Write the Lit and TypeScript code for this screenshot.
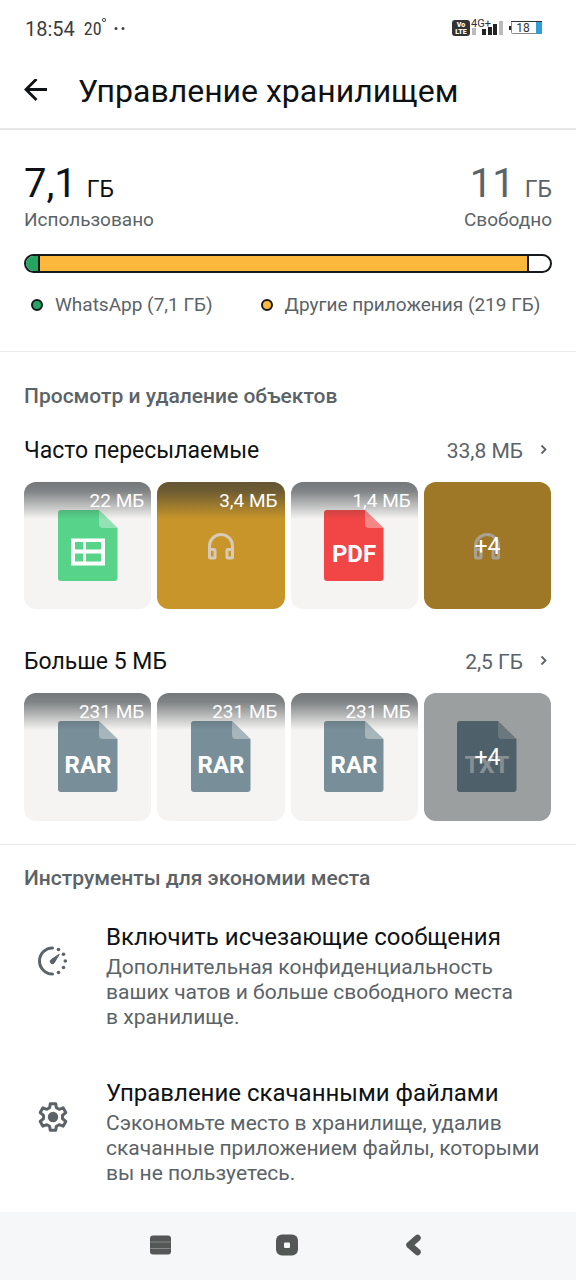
import { LitElement, html, css, svg, nothing } from "lit";
import { customElement, property } from "lit/decorators.js";

type Kind = "sheet" | "audio" | "pdf" | "rar" | "txt";

interface Tile {
  kind: Kind;
  size?: string;
  more?: string;
}

interface Group {
  title: string;
  total: string;
  tiles: Tile[];
}

const GROUPS: Group[] = [
  {
    title: "Часто пересылаемые",
    total: "33,8 МБ",
    tiles: [
      { kind: "sheet", size: "22 МБ" },
      { kind: "audio", size: "3,4 МБ" },
      { kind: "pdf", size: "1,4 МБ" },
      { kind: "audio", more: "+4" },
    ],
  },
  {
    title: "Больше 5 МБ",
    total: "2,5 ГБ",
    tiles: [
      { kind: "rar", size: "231 МБ" },
      { kind: "rar", size: "231 МБ" },
      { kind: "rar", size: "231 МБ" },
      { kind: "txt", more: "+4" },
    ],
  },
];

const USAGE = [
  { name: "app", share: 2.6 },
  { name: "other", share: 93.4 },
];

const FILE_COLORS: Record<Kind, string> = {
  sheet: "#58d38a",
  audio: "#c8952b",
  pdf: "#f24646",
  rar: "#788f9a",
  txt: "#788f9a",
};

@customElement("file-tile")
export class FileTile extends LitElement {
  @property({ attribute: false }) tile!: Tile;

  static styles = css`
    :host {
      display: block;
    }
    .tile {
      position: relative;
      display: grid;
      place-items: center;
      width: 100%;
      aspect-ratio: 1;
      padding: 0;
      border: 0;
      border-radius: 12px;
      overflow: hidden;
      background: #f5f4f2;
      font-family: Roboto, sans-serif;
      cursor: pointer;
    }
    .audio {
      background: #c8952b;
    }
    .shade {
      position: absolute;
      inset: 0 0 auto;
      height: 37px;
      background: linear-gradient(rgba(45, 52, 56, 0.65), rgba(45, 52, 56, 0.58) 25%, rgba(45, 52, 56, 0));
    }
    .size {
      position: absolute;
      top: 6px;
      right: 7px;
      font-size: 19px;
      line-height: 26px;
      color: #fff;
    }
    .more {
      position: absolute;
      inset: 0;
      display: grid;
      place-items: center;
      padding-top: 2px;
      font-size: 23px;
      line-height: 28px;
      color: #fff;
      background: rgba(11, 20, 26, 0.38);
    }
    .audio .more {
      background: rgba(11, 20, 26, 0.22);
    }
    .file {
      width: 60px;
      height: 71px;
    }
    .phones {
      width: 40px;
      height: 40px;
    }
    .ext {
      font: 700 24px Roboto, sans-serif;
      fill: #fff;
    }
    .dim {
      fill: #d6dadc;
    }
  `;

  private icon(kind: Kind) {
    if (kind === "audio") {
      return html`<svg class="phones" viewBox="0 0 40 40" fill="none" stroke="#d8cab8" stroke-width="3" aria-hidden="true">
        <path d="M8.500 24V20a11.500 11.500 0 0 1 23 0V24" />
        <rect x="8.500" y="23.500" width="5.500" height="8.500" rx="1" />
        <rect x="26" y="23.500" width="5.500" height="8.500" rx="1" />
      </svg>`;
    }
    return html`<svg class="file" viewBox="0 0 60 71" aria-hidden="true">
      <path d="M3 0H41L59.500 18V68a3 3 0 0 1-3 3H3a3 3 0 0 1-3-3V3a3 3 0 0 1 3-3Z" fill=${FILE_COLORS[kind]} />
      <path d="M41 0L59.500 18H45a4 4 0 0 1-4-4Z" fill="#fff" fill-opacity=".35" />
      ${kind === "sheet"
        ? svg`<path fill-rule="evenodd" fill="#fff" d="M13 28.500H47V55.500H13ZM17 32V39.500H25V32ZM28 32V39.500H43V32ZM17 43.500V51.500H25V43.500ZM28 43.500V51.500H43V43.500Z"/>`
        : svg`<text class=${kind === "txt" ? "ext dim" : "ext"} x="30" y="52" text-anchor="middle">${kind.toUpperCase()}</text>`}
    </svg>`;
  }

  render() {
    const { kind, size, more } = this.tile;
    return html`<button class="tile ${kind}" type="button">
      ${size ? html`<span class="shade"></span>` : nothing}
      ${this.icon(kind)}
      ${size ? html`<span class="size">${size}</span>` : nothing}
      ${more ? html`<span class="more">${more}</span>` : nothing}
    </button>`;
  }
}

@customElement("app-root")
export class AppRoot extends LitElement {
  static styles = css`
    :host {
      display: flex;
      flex-direction: column;
      min-height: 100vh;
      background: #fff;
      color: #0e1215;
      font-family: Roboto, sans-serif;
    }
    * {
      box-sizing: border-box;
    }
    h1,
    h2,
    h3,
    p,
    ul {
      margin: 0;
      padding: 0;
      font-weight: 400;
      list-style: none;
    }
    svg {
      display: block;
      flex: none;
    }
    button {
      padding: 0;
      border: 0;
      background: none;
      font: inherit;
      color: inherit;
      text-align: left;
      cursor: pointer;
    }
    .status {
      display: flex;
      align-items: center;
      height: 56px;
      padding: 2px 33px 0 25px;
      color: #3c3c3c;
      font-size: 20px;
      line-height: 24px;
    }
    .temp {
      margin-left: 9px;
      font-size: 18px;
      font-family: "Roboto Condensed", Roboto, sans-serif;
    }
    .deg {
      align-self: flex-start;
      margin: 15px 7px 0 0;
    }
    .signals {
      margin-left: auto;
    }
    .tiny {
      font: 11px Roboto, sans-serif;
      fill: #333;
    }
    .volte {
      font: 900 7px Roboto, sans-serif;
      fill: #fff;
    }
    .charge {
      font: 12px Roboto, sans-serif;
      fill: #333;
    }
    .bar {
      display: flex;
      align-items: center;
      gap: 30px;
      height: 74px;
      padding: 0 24px 2px;
      border-bottom: 2px solid #e6e7e8;
    }
    .title {
      font-size: 32px;
      line-height: 40px;
    }
    section {
      padding: 0 24px;
      border-bottom: 1px solid #e9eaeb;
    }
    .storage {
      padding-top: 30px;
      padding-bottom: 34px;
    }
    .figures {
      display: flex;
      justify-content: space-between;
    }
    .amount {
      font-size: 40px;
      line-height: 48px;
    }
    .unit {
      font-size: 23px;
      line-height: 24px;
    }
    .caption,
    .free {
      color: #5b6368;
    }
    .free {
      text-align: right;
    }
    .caption {
      font-size: 19px;
      line-height: 24px;
    }
    .meter {
      display: flex;
      height: 19px;
      margin-top: 22px;
      border: 2px solid #15191b;
      border-radius: 10px;
      overflow: hidden;
    }
    .part {
      border-right: 2px solid #15191b;
    }
    .app {
      background: #25a562;
    }
    .other {
      background: #fbb83c;
    }
    .legend {
      display: flex;
      gap: 48px;
      margin-top: 19px;
      padding-left: 7px;
    }
    .key {
      display: flex;
      align-items: center;
      gap: 12px;
      font-size: 19px;
      line-height: 25px;
      color: #5b6368;
      white-space: nowrap;
    }
    .dot {
      width: 12px;
      height: 12px;
      border: 2px solid #15191b;
      border-radius: 50%;
    }
    .review {
      padding-top: 32px;
      padding-bottom: 23px;
    }
    .heading {
      font-size: 21px;
      line-height: 24px;
      font-weight: 500;
      color: #5b6368;
    }
    .group {
      margin-top: 27px;
    }
    .group + .group {
      margin-top: 37px;
    }
    .row {
      display: flex;
      align-items: center;
      width: 100%;
      line-height: 32px;
    }
    .name {
      flex: 1;
      font-size: 23px;
    }
    .total {
      font-size: 21px;
      color: #5b6368;
    }
    .chevron {
      margin-left: 14px;
    }
    .tiles {
      display: grid;
      grid-template-columns: repeat(4, 1fr);
      gap: 6px;
      margin-top: 15px;
      padding-right: 1px;
    }
    .tools {
      flex: 1;
      padding-top: 21px;
      border: 0;
    }
    .options {
      display: flex;
      flex-direction: column;
      gap: 49px;
      padding: 33px 0 26px;
    }
    .option {
      display: flex;
      align-items: flex-start;
      gap: 37px;
      width: 100%;
      padding-left: 13px;
    }
    .option svg {
      margin-top: 22px;
    }
    .label {
      display: block;
      font-size: 24px;
      line-height: 28px;
      margin-bottom: 4px;
    }
    .text {
      display: block;
      font-size: 21px;
      line-height: 25px;
      color: #5b6368;
      white-space: pre-line;
    }
    .nav {
      display: flex;
      align-items: center;
      justify-content: space-around;
      height: 69px;
      padding: 0 17%;
      background: #f6f7f9;
    }
    .nav button {
      width: 32px;
      height: 32px;
    }
  `;

  private status() {
    return html`<div class="status">
      <span>18:54</span><span class="temp">20</span>
      <svg class="deg" width="5" height="6" viewBox="0 0 5 6" fill="none" stroke="#444"><circle cx="2" cy="3" r="1.600" /></svg>
      <svg width="11" height="4" viewBox="0 0 11 4" fill="#444"><circle cx="2" cy="1.500" r="1.500" /><circle cx="9" cy="1.500" r="1.500" /></svg>
      <svg class="signals" width="91" height="24" viewBox="0 0 91 24">
        <rect x="0" y="3" width="18" height="16" rx="3" fill="#333" />
        <text class="volte" x="9" y="10" text-anchor="middle">Vo</text>
        <text class="volte" x="9" y="17" text-anchor="middle">LTE</text>
        <text class="tiny" x="19" y="10">4G+</text>
        <path d="M20 11h4v7h-4zM47 4h4v14h-4z" fill="#bbb" />
        <path d="M30 12h4v6h-4zM36 10h4v8h-4zM41 7h4v11h-4z" fill="#222" />
        <path d="M57 9h2v4h-2z" fill="#222" />
        <rect x="59.500" y="4.500" width="30" height="12" rx="1" fill="#fff" stroke="#888" />
        <path d="M59 4.500h31" stroke="#333" />
        <rect x="84" y="5" width="6" height="12" fill="#2f9fd6" />
        <text class="charge" x="71" y="15" text-anchor="middle">18</text>
      </svg>
    </div>`;
  }

  private group(g: Group) {
    return html`<div class="group">
      <button class="row" type="button">
        <span class="name">${g.title}</span>
        <span class="total">${g.total}</span>
        <svg class="chevron" width="15" height="16" viewBox="0 0 15 16" fill="none" stroke="#5b6368" stroke-width="1.800">
          <path d="M4.500 2.500L8.500 6.500L4.500 10.500" />
        </svg>
      </button>
      <div class="tiles">${g.tiles.map((t) => html`<file-tile .tile=${t}></file-tile>`)}</div>
    </div>`;
  }

  render() {
    return html`
      ${this.status()}
      <header class="bar">
        <button type="button" aria-label="Назад">
          <svg width="24" height="24" viewBox="0 0 24 24" fill="none" stroke="#0e1215" stroke-width="2.800">
            <path d="M23 10.500H2M12.500 0L2 10.500L12.500 21" />
          </svg>
        </button>
        <h1 class="title">Управление хранилищем</h1>
      </header>
      <section class="storage">
        <div class="figures">
          <div>
            <p class="amount">7,1 <span class="unit">ГБ</span></p>
            <p class="caption">Использовано</p>
          </div>
          <div class="free">
            <p class="amount">11 <span class="unit">ГБ</span></p>
            <p class="caption">Свободно</p>
          </div>
        </div>
        <div class="meter">
          ${USAGE.map((u) => html`<div class="part ${u.name}" style="width:${u.share}%"></div>`)}
        </div>
        <ul class="legend">
          <li class="key"><span class="dot app"></span>WhatsApp (7,1 ГБ)</li>
          <li class="key"><span class="dot other"></span>Другие приложения (219 ГБ)</li>
        </ul>
      </section>
      <section class="review">
        <h2 class="heading">Просмотр и удаление объектов</h2>
        ${GROUPS.map((g) => this.group(g))}
      </section>
      <section class="tools">
        <h2 class="heading">Инструменты для экономии места</h2>
        <div class="options">
          <button class="option" type="button">
            <svg width="32" height="32" viewBox="0 0 32 32" fill="#5b6368">
              <path d="M15.500 3A13 13 0 0 0 15.500 29" fill="none" stroke="#5b6368" stroke-width="3" stroke-linecap="round" />
              <circle cx="21.500" cy="4.500" r="1.800" /><circle cx="26.500" cy="9.200" r="1.800" />
              <circle cx="28.300" cy="16" r="1.800" /><circle cx="26.500" cy="22.500" r="1.800" />
              <circle cx="21.500" cy="27.500" r="1.800" />
              <path d="M22.300 9.200L17.600 17.200A2.300 2.300 0 1 1 14.400 14.400Z" stroke="#5b6368" stroke-linejoin="round" />
            </svg>
            <span>
              <span class="label">Включить исчезающие сообщения</span>
              <span class="text">${"Дополнительная конфиденциальность\nваших чатов и больше свободного места\nв хранилище."}</span>
            </span>
          </button>
          <button class="option" type="button">
            <svg width="32" height="32" viewBox="0 0 32 32">
              <path
                d="M13.300 2.800h5.400l.7 4 2.700 1.500 4-1.500 2.700 4.700-3.300 2.800v3.400l3.300 2.800-2.700 4.700-4-1.500-2.700 1.500-.7 4h-5.400l-.7-4-2.700-1.500-4 1.500-2.700-4.700 3.300-2.800v-3.400l-3.300-2.800 2.700-4.700 4 1.500 2.700-1.500z"
                fill="none" stroke="#5b6368" stroke-width="3" stroke-linejoin="round" />
              <circle cx="16" cy="16" r="5.200" fill="#5b6368" />
            </svg>
            <span>
              <span class="label">Управление скачанными файлами</span>
              <span class="text">${"Сэкономьте место в хранилище, удалив\nскачанные приложением файлы, которыми\nвы не пользуетесь."}</span>
            </span>
          </button>
        </div>
      </section>
      <nav class="nav">
        <button type="button" aria-label="Недавние">
          <svg width="32" height="32" viewBox="0 0 32 32"><rect x="5" y="5.500" width="21" height="19" rx="3" fill="#535755" /><path d="M5.500 12h20M5.500 18.500h20" stroke="#868988" /></svg>
        </button>
        <button type="button" aria-label="Главный экран">
          <svg width="32" height="32" viewBox="0 0 32 32"><rect x="4" y="4.500" width="22" height="21" rx="6" fill="#535755" /><rect x="12" y="12.500" width="6" height="5.500" rx="1" fill="#f6f7f9" /></svg>
        </button>
        <button type="button" aria-label="Назад">
          <svg width="32" height="32" viewBox="0 0 32 32" fill="none" stroke="#535755" stroke-width="6.500" stroke-linecap="round" stroke-linejoin="round"><path d="M18.500 8L10.500 15L18.500 22" /></svg>
        </button>
      </nav>
    `;
  }
}
